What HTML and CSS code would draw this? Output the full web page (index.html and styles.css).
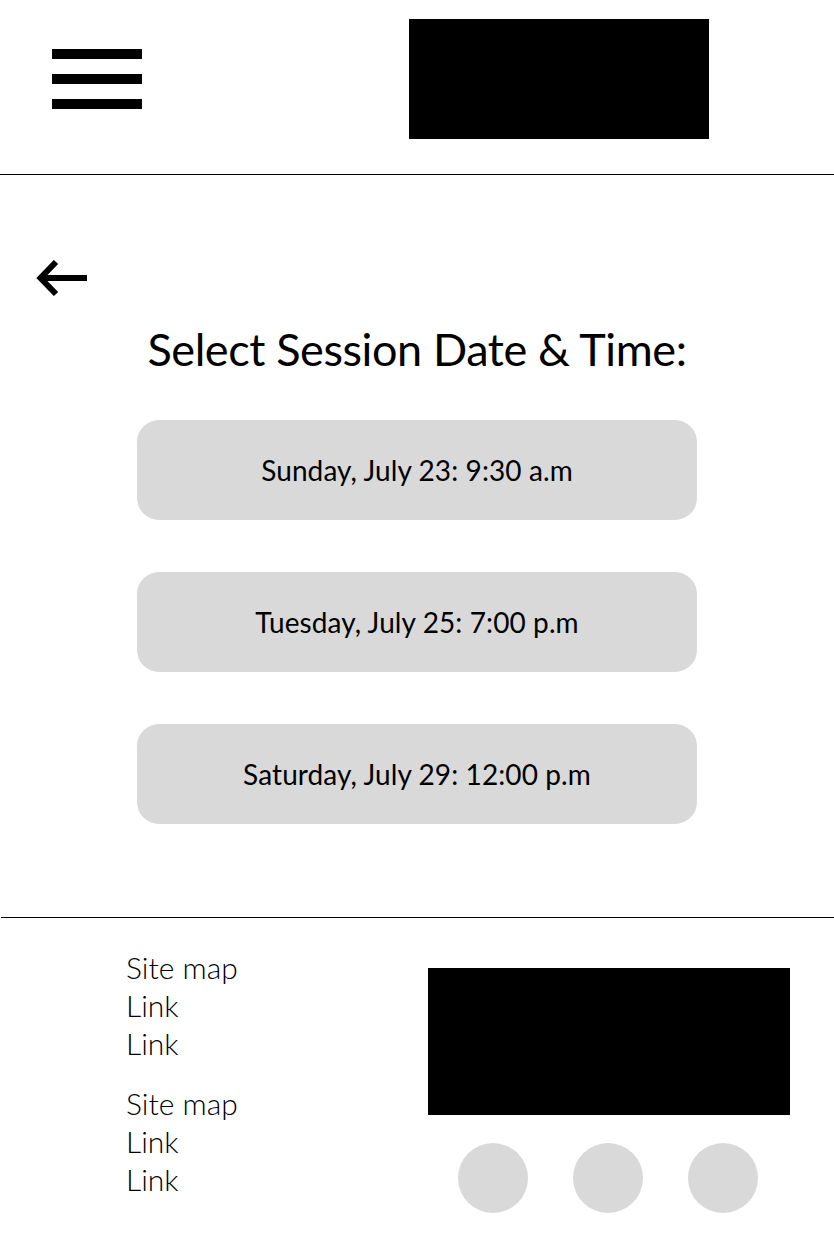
FILE: index.html
```html
<!DOCTYPE html>
<html lang="en">
<head>
<meta charset="utf-8">
<title>Select Session</title>
<link rel="stylesheet" href="styles.css">
</head>
<body>
<header class="site-header">
  <div class="menu-icon" aria-label="Menu">
    <span class="bar"></span>
    <span class="bar"></span>
    <span class="bar"></span>
  </div>
  <div class="logo"></div>
</header>
<main class="content">
  <a class="back" href="#" aria-label="Back">
    <svg width="52" height="36" viewBox="0 0 52 36">
      <path d="M20 2 L4.5 18 L20 34" fill="none" stroke="#000" stroke-width="6" stroke-linecap="butt" stroke-linejoin="miter"/>
      <line x1="6" y1="18" x2="51" y2="18" stroke="#000" stroke-width="6"/>
    </svg>
  </a>
  <h1 class="title">Select Session Date &amp; Time:</h1>
  <div class="sessions">
    <button class="session">Sunday, July 23: 9:30 a.m</button>
    <button class="session">Tuesday, July 25: 7:00 p.m</button>
    <button class="session">Saturday, July 29: 12:00 p.m</button>
  </div>
</main>
<footer class="site-footer">
  <div class="links">
    <ul class="link-group">
      <li>Site map</li>
      <li>Link</li>
      <li>Link</li>
    </ul>
    <ul class="link-group">
      <li>Site map</li>
      <li>Link</li>
      <li>Link</li>
    </ul>
  </div>
  <div class="brand">
    <div class="footer-logo"></div>
    <div class="socials">
      <span class="social"></span>
      <span class="social"></span>
      <span class="social"></span>
    </div>
  </div>
</footer>
</body>
</html>
```
FILE: styles.css
```css
* { box-sizing: border-box; }
html, body { margin: 0; padding: 0; background: #fff; }
body {
  width: 834px;
  font-family: "Lato", "Open Sans", sans-serif;
  color: #000;
}
.site-header {
  height: 175px;
  display: flex;
  align-items: flex-start;
  padding-top: 19px;
  border-bottom: 1px solid #000;
}
.menu-icon {
  margin-left: 52px;
  margin-top: 30px;
  width: 90px;
  display: flex;
  flex-direction: column;
  gap: 15px;
}
.bar { display: block; height: 10px; background: #000; }
.logo {
  margin-left: 267px;
  width: 300px;
  height: 120px;
  background: #000;
}
.content {
  padding: 85px 0 93px;
}
.back {
  display: block;
  margin-left: 36px;
  width: 52px;
  height: 36px;
}
.back svg { display: block; }
.title {
  margin: 21px 0 0;
  text-align: center;
  font-size: 45px;
  font-weight: 400;
  line-height: 64px;
  letter-spacing: -0.4px;
}
.sessions {
  margin-top: 39px;
  display: flex;
  flex-direction: column;
  align-items: center;
  gap: 52px;
}
.session {
  width: 560px;
  height: 100px;
  border: none;
  border-radius: 22px;
  background: #d9d9d9;
  font-family: inherit;
  font-size: 28px;
  letter-spacing: 0.1px;
  color: #000;
  padding: 0;
  cursor: pointer;
}
.site-footer {
  margin-left: 1px;
  border-top: 1px solid #000;
  display: flex;
  padding-top: 30px;
  height: 319px;
}
.links {
  margin-left: 125px;
  width: 302px;
}
.link-group {
  list-style: none;
  margin: 0 0 22px;
  padding: 0;
  font-size: 30px;
  font-weight: 300;
  line-height: 38px;
}
.brand {
  padding-top: 20px;
  width: 362px;
}
.footer-logo {
  height: 147px;
  background: #000;
}
.socials {
  margin-top: 28px;
  display: flex;
  gap: 45px;
  padding-left: 30px;
}
.social {
  width: 70px;
  height: 70px;
  border-radius: 50%;
  background: #d9d9d9;
}
```
